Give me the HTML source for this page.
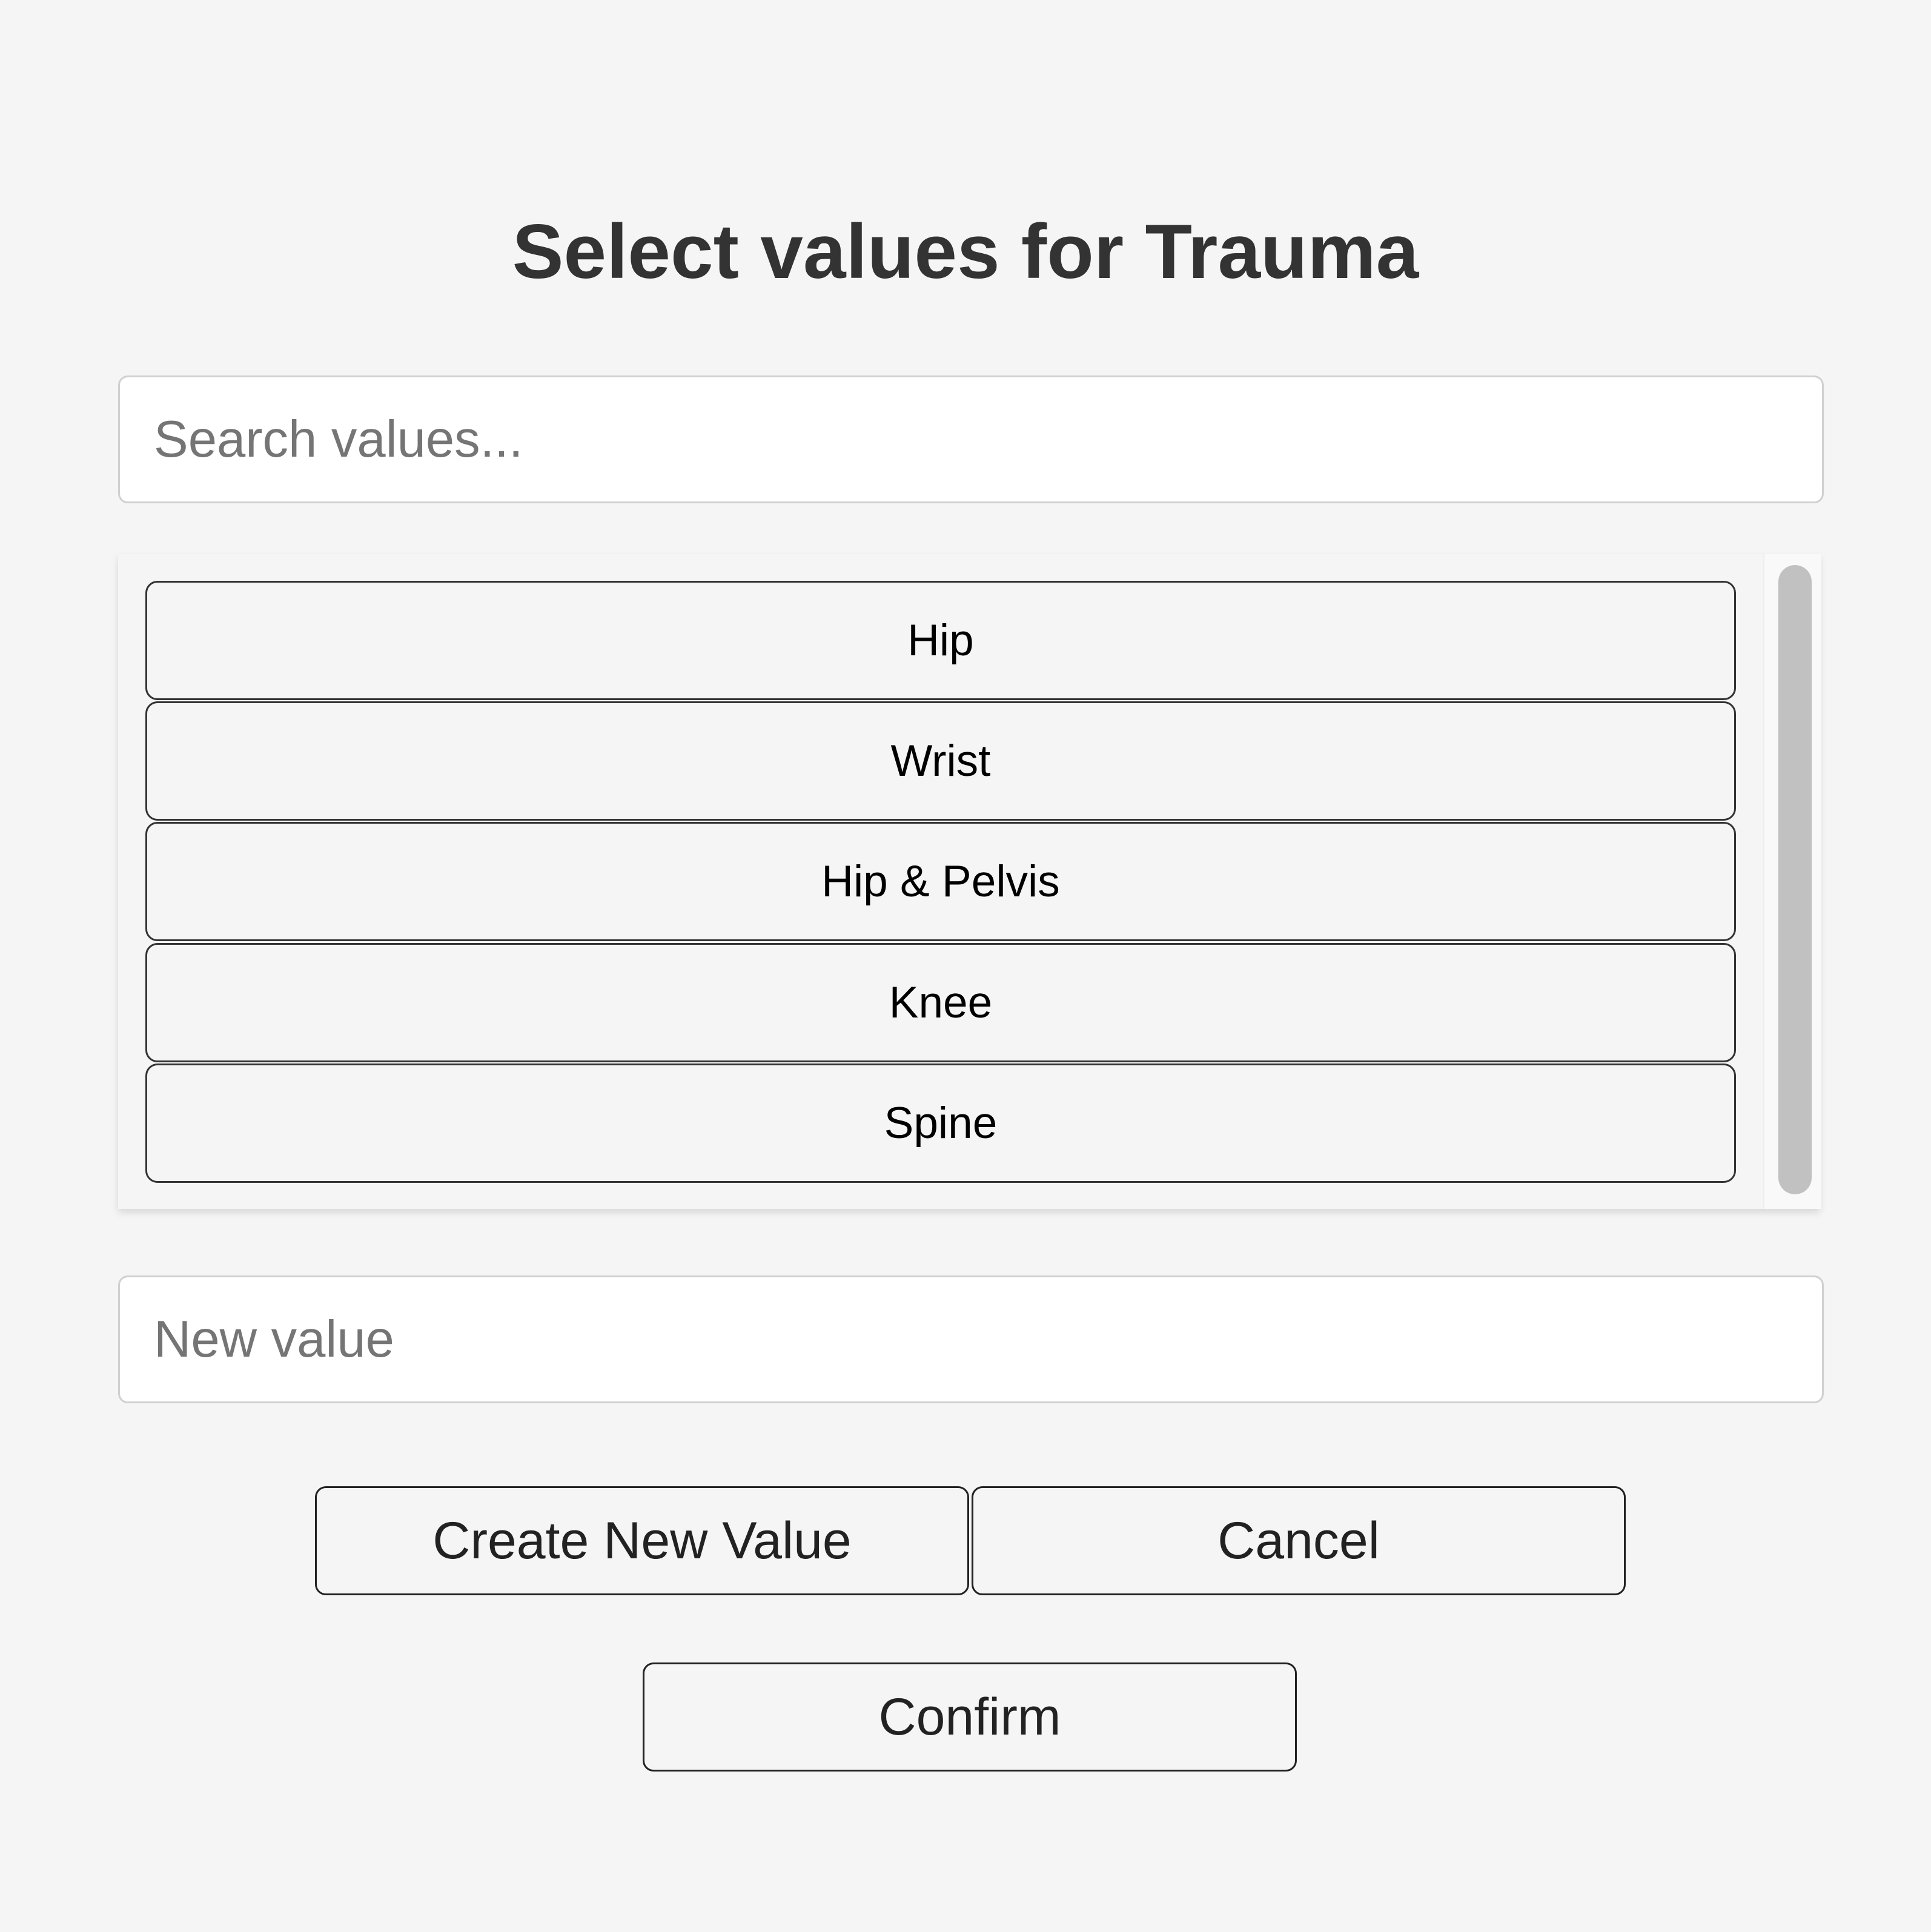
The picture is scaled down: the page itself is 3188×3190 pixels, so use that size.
<!DOCTYPE html>
<html><head><meta charset="utf-8"><style>
html,body{margin:0;padding:0;}
body{width:3188px;height:3190px;background:#f5f5f5;position:relative;overflow:hidden;font-family:"Liberation Sans",sans-serif;}
.title{position:absolute;left:0;width:3188px;top:340px;text-align:center;font-weight:bold;font-size:127px;color:#333;line-height:150px;letter-spacing:0px;}
.inp{position:absolute;left:195px;width:2816px;background:#fff;border:3px solid #d0d0d0;border-radius:16px;box-sizing:border-box;}
.inp span{position:absolute;left:56px;top:0;bottom:0;display:flex;align-items:center;font-size:85px;color:#757575;}
.list{position:absolute;left:195px;top:915px;width:2810px;height:1081px;background:#f5f5f5;box-shadow:0 6px 12px rgba(0,0,0,0.12);}
.track{position:absolute;left:2716px;top:0;width:94px;height:1081px;background:#f9f9f9;border-left:2px solid #eee;}
.thumb{position:absolute;left:2741px;top:18px;width:55px;height:1039px;background:#c1c1c1;border-radius:28px;}
.item{position:absolute;left:45px;width:2626px;height:197px;border:3px solid #333;border-radius:20px;box-sizing:border-box;display:flex;align-items:center;justify-content:center;font-size:73px;color:#000;}
.btn{position:absolute;height:180px;width:1080px;border:3px solid #222;border-radius:18px;box-sizing:border-box;display:flex;align-items:center;justify-content:center;font-size:86px;color:#222;}
</style></head><body>
<div class="title">Select values for Trauma</div>
<div class="inp" style="top:620px;height:211px"><span>Search values...</span></div>
<div class="list">
<div class="item" style="top:44px">Hip</div>
<div class="item" style="top:243px">Wrist</div>
<div class="item" style="top:442px">Hip &amp; Pelvis</div>
<div class="item" style="top:642px">Knee</div>
<div class="item" style="top:841px">Spine</div>
<div class="track"></div>
<div class="thumb"></div>
</div>
<div class="inp" style="top:2106px;height:211px"><span>New value</span></div>
<div class="btn" style="left:520px;top:2454px">Create New Value</div>
<div class="btn" style="left:1604px;top:2454px">Cancel</div>
<div class="btn" style="left:1061px;top:2745px">Confirm</div>
</body></html>
